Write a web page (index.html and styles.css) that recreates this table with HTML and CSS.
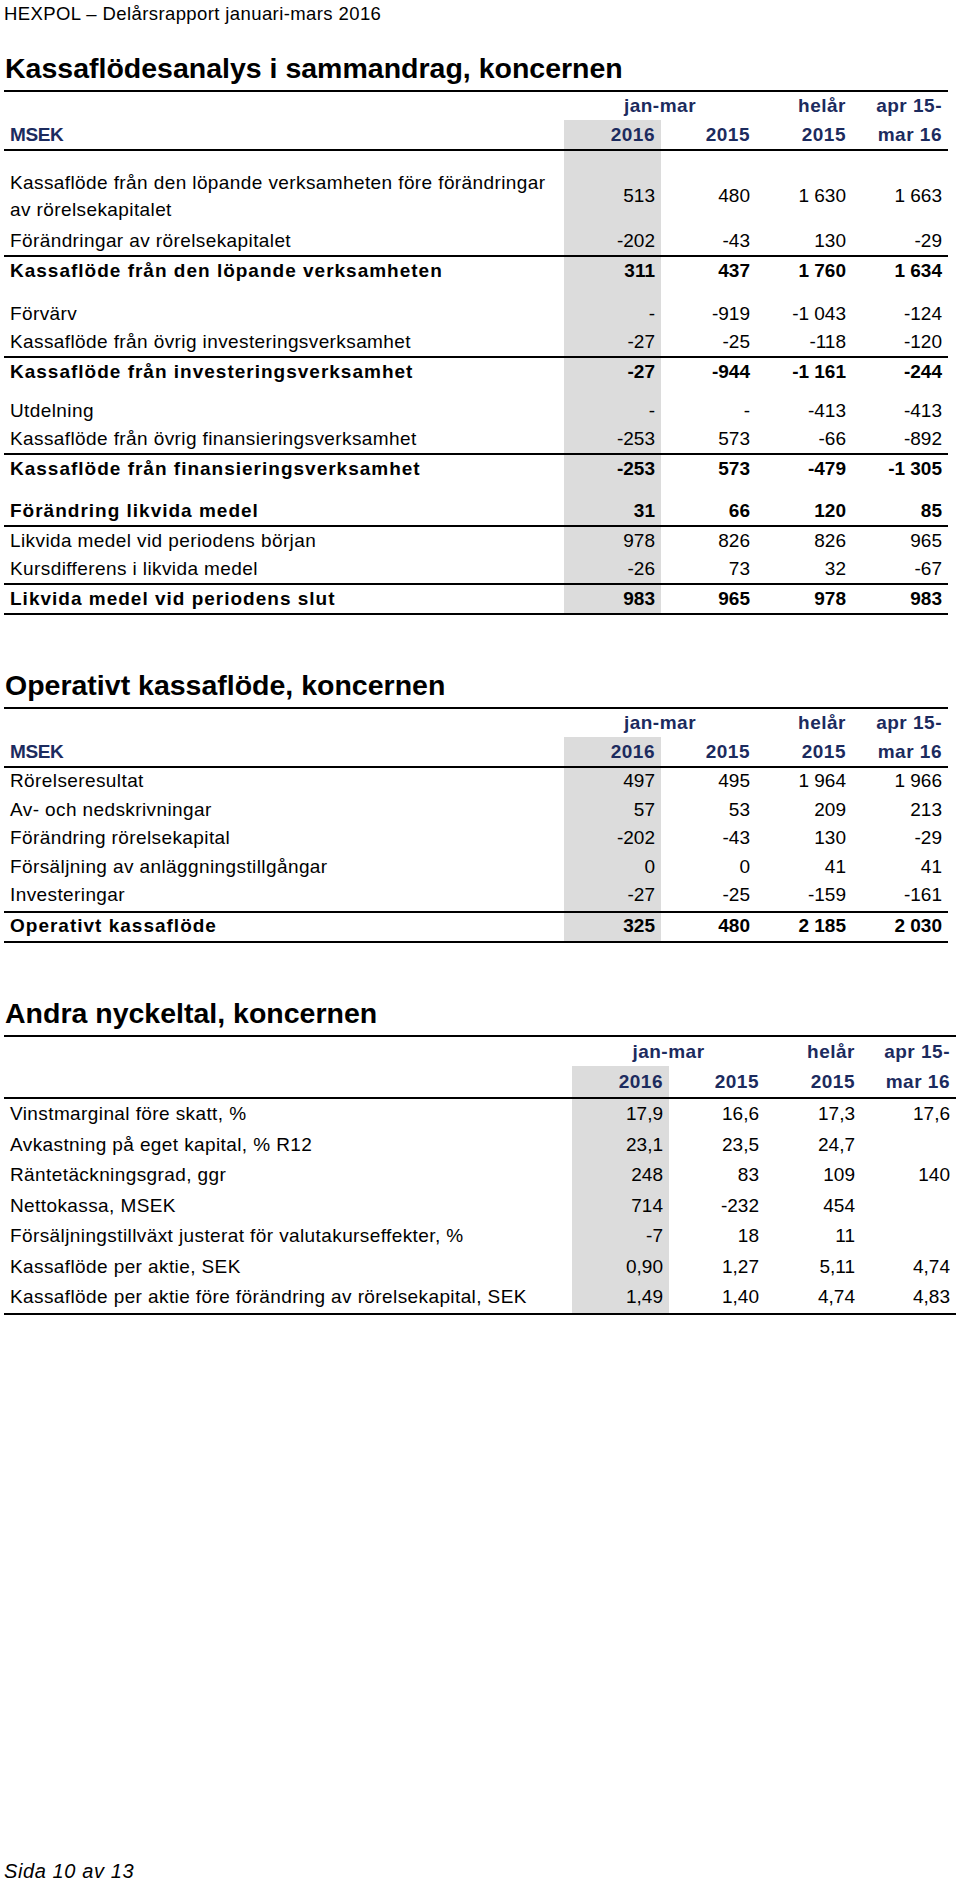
FILE: index.html
```html
<!DOCTYPE html>
<html lang="sv">
<head>
<meta charset="utf-8">
<title>HEXPOL – Delårsrapport januari-mars 2016</title>
<link rel="stylesheet" href="styles.css">
</head>
<body>
<div class="page">
  <header class="running-head">HEXPOL – Delårsrapport januari-mars 2016</header>

  <section class="report sec-cash">
    <h2 class="section-title">Kassaflödesanalys i sammandrag, koncernen</h2>
    <div class="fin-table fin-table--narrow fin-table--cash">
      <div class="row head head-1"><span class="lbl"></span><span class="span2">jan-mar</span><span>helår</span><span>apr 15-</span></div>
      <div class="row head head-2"><span class="lbl msek">MSEK</span><span class="cur">2016</span><span>2015</span><span>2015</span><span>mar 16</span></div>
      <div class="row gap rule"><span class="lbl"></span><span class="cur"></span><span></span><span></span><span></span></div>
      <div class="row body multi"><span class="lbl">Kassaflöde från den löpande verksamheten före förändringar<br>av rörelsekapitalet</span><span class="cur">513</span><span>480</span><span>1 630</span><span>1 663</span></div>
      <div class="row body"><span class="lbl">Förändringar av rörelsekapitalet</span><span class="cur">-202</span><span>-43</span><span>130</span><span>-29</span></div>
      <div class="row body total rule"><span class="lbl">Kassaflöde från den löpande verksamheten</span><span class="cur">311</span><span>437</span><span>1 760</span><span>1 634</span></div>
      <div class="row gap gap-l"><span class="lbl"></span><span class="cur"></span><span></span><span></span><span></span></div>
      <div class="row body"><span class="lbl">Förvärv</span><span class="cur">-</span><span>-919</span><span>-1 043</span><span>-124</span></div>
      <div class="row body"><span class="lbl">Kassaflöde från övrig investeringsverksamhet</span><span class="cur">-27</span><span>-25</span><span>-118</span><span>-120</span></div>
      <div class="row body total rule"><span class="lbl">Kassaflöde från investeringsverksamhet</span><span class="cur">-27</span><span>-944</span><span>-1 161</span><span>-244</span></div>
      <div class="row gap gap-s"><span class="lbl"></span><span class="cur"></span><span></span><span></span><span></span></div>
      <div class="row body"><span class="lbl">Utdelning</span><span class="cur">-</span><span>-</span><span>-413</span><span>-413</span></div>
      <div class="row body"><span class="lbl">Kassaflöde från övrig finansieringsverksamhet</span><span class="cur">-253</span><span>573</span><span>-66</span><span>-892</span></div>
      <div class="row body total rule"><span class="lbl">Kassaflöde från finansieringsverksamhet</span><span class="cur">-253</span><span>573</span><span>-479</span><span>-1 305</span></div>
      <div class="row gap"><span class="lbl"></span><span class="cur"></span><span></span><span></span><span></span></div>
      <div class="row body total"><span class="lbl">Förändring likvida medel</span><span class="cur">31</span><span>66</span><span>120</span><span>85</span></div>
      <div class="row body rule"><span class="lbl">Likvida medel vid periodens början</span><span class="cur">978</span><span>826</span><span>826</span><span>965</span></div>
      <div class="row body"><span class="lbl">Kursdifferens i likvida medel</span><span class="cur">-26</span><span>73</span><span>32</span><span>-67</span></div>
      <div class="row body total rule"><span class="lbl">Likvida medel vid periodens slut</span><span class="cur">983</span><span>965</span><span>978</span><span>983</span></div>
    </div>
  </section>

  <section class="report sec-op">
    <h2 class="section-title">Operativt kassaflöde, koncernen</h2>
    <div class="fin-table fin-table--narrow fin-table--op">
      <div class="row head head-1"><span class="lbl"></span><span class="span2">jan-mar</span><span>helår</span><span>apr 15-</span></div>
      <div class="row head head-2"><span class="lbl msek">MSEK</span><span class="cur">2016</span><span>2015</span><span>2015</span><span>mar 16</span></div>
      <div class="row body rule"><span class="lbl">Rörelseresultat</span><span class="cur">497</span><span>495</span><span>1 964</span><span>1 966</span></div>
      <div class="row body"><span class="lbl">Av- och nedskrivningar</span><span class="cur">57</span><span>53</span><span>209</span><span>213</span></div>
      <div class="row body"><span class="lbl">Förändring rörelsekapital</span><span class="cur">-202</span><span>-43</span><span>130</span><span>-29</span></div>
      <div class="row body"><span class="lbl">Försäljning av anläggningstillgångar</span><span class="cur">0</span><span>0</span><span>41</span><span>41</span></div>
      <div class="row body"><span class="lbl">Investeringar</span><span class="cur">-27</span><span>-25</span><span>-159</span><span>-161</span></div>
      <div class="row body total rule"><span class="lbl">Operativt kassaflöde</span><span class="cur">325</span><span>480</span><span>2 185</span><span>2 030</span></div>
    </div>
  </section>

  <section class="report sec-keys">
    <h2 class="section-title">Andra nyckeltal, koncernen</h2>
    <div class="fin-table fin-table--wide fin-table--keys">
      <div class="row head head-1"><span class="lbl"></span><span class="span2">jan-mar</span><span>helår</span><span>apr 15-</span></div>
      <div class="row head head-2"><span class="lbl"></span><span class="cur">2016</span><span>2015</span><span>2015</span><span>mar 16</span></div>
      <div class="row body rule"><span class="lbl">Vinstmarginal före skatt, %</span><span class="cur">17,9</span><span>16,6</span><span>17,3</span><span>17,6</span></div>
      <div class="row body"><span class="lbl">Avkastning på eget kapital, % R12</span><span class="cur">23,1</span><span>23,5</span><span>24,7</span><span></span></div>
      <div class="row body"><span class="lbl">Räntetäckningsgrad, ggr</span><span class="cur">248</span><span>83</span><span>109</span><span>140</span></div>
      <div class="row body"><span class="lbl">Nettokassa, MSEK</span><span class="cur">714</span><span>-232</span><span>454</span><span></span></div>
      <div class="row body"><span class="lbl">Försäljningstillväxt justerat för valutakurseffekter, %</span><span class="cur">-7</span><span>18</span><span>11</span><span></span></div>
      <div class="row body"><span class="lbl">Kassaflöde per aktie, SEK</span><span class="cur">0,90</span><span>1,27</span><span>5,11</span><span>4,74</span></div>
      <div class="row body"><span class="lbl">Kassaflöde per aktie före förändring av rörelsekapital, SEK</span><span class="cur">1,49</span><span>1,40</span><span>4,74</span><span>4,83</span></div>
    </div>
  </section>

  <footer class="folio">Sida 10 av 13</footer>
</div>
</body>
</html>
```

FILE: styles.css
```css
* { box-sizing: border-box; }

html, body {
  margin: 0;
  padding: 0;
  background: #fff;
}

body {
  font-family: "Liberation Sans", Arial, sans-serif;
  color: #000;
}

.page {
  width: 960px;
  min-height: 1883px;
  padding: 2px 4px 0;
  display: flex;
  flex-direction: column;
}

.running-head {
  font-size: 18.5px;
  line-height: 23px;
  letter-spacing: 0.4px;
  padding-left: 0;
}

.section-title {
  margin: 0;
  padding: 0 0 5px 1px;
  font-size: 28.5px;
  font-weight: bold;
  line-height: 34px;
  white-space: nowrap;
}

.sec-cash { margin-top: 26px; }
.sec-op,
.sec-keys { margin-top: 53px; }

.fin-table {
  border-top: 2px solid #000;
  border-bottom: 2px solid #000;
}

.fin-table--narrow {
  width: 944px;
  --cols: 560px 97px 95px 96px 96px;
}

.fin-table--wide {
  width: 952px;
  --cols: 568px 97px 96px 96px 95px;
}

.row {
  box-sizing: content-box;
  display: grid;
  grid-template-columns: var(--cols);
  font-size: 19px;
  height: 28px;
  line-height: 28px;
}

.row > span {
  display: block;
  text-align: right;
  padding-right: 6px;
  white-space: nowrap;
}

.row > .lbl {
  text-align: left;
  padding-left: 6px;
  padding-right: 0;
  letter-spacing: 0.4px;
}

.row > .cur { background: #dcdcdc; }

.rule { border-top: 2px solid #000; }

/* header rows */
.head {
  color: #1c2b5e;
  font-weight: bold;
}
.head > span { letter-spacing: 0.5px; }
.head > .msek { letter-spacing: -0.4px; }
.head-1 { height: 28px; line-height: 28px; }
.head-2 { height: 29px; line-height: 29px; }
.head-1 > .span2 {
  grid-column: 2 / span 2;
  text-align: center;
  padding-right: 0;
}

/* body rows */
.total { font-weight: bold; }
.total > .lbl { letter-spacing: 1px; }

.gap { height: 14px; }
.gap.gap-l { height: 15px; }
.gap.gap-s { height: 11px; }

.multi { height: 62px; }
.multi > span { padding-top: 17px; }
.multi > .lbl {
  padding-top: 4px;
  line-height: 27px;
}

.fin-table--op .body {
  height: 28.5px;
  line-height: 25px;
}

.fin-table--keys .head-1 { height: 29px; line-height: 29px; }
.fin-table--keys .head-2 { height: 31px; line-height: 31px; }
.fin-table--keys .body {
  height: 30.5px;
  line-height: 30.5px;
}

.folio {
  margin-top: auto;
  font-style: italic;
  font-size: 20px;
  line-height: 23px;
  letter-spacing: 0.6px;
}
```
